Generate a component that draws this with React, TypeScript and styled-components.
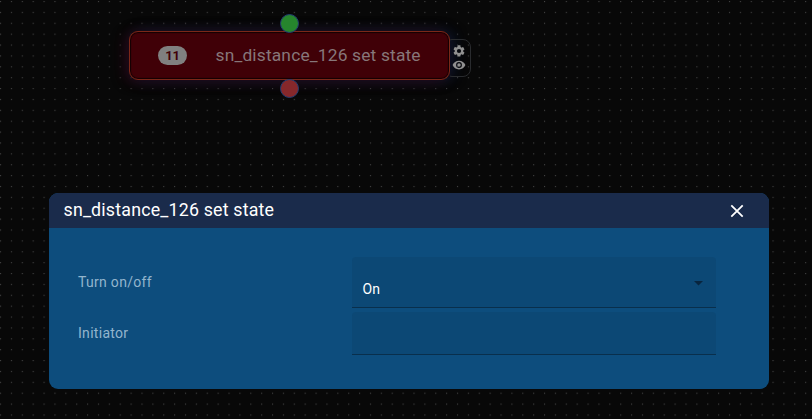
import React from "react";
import styled, { createGlobalStyle } from "styled-components";

const GlobalStyle = createGlobalStyle`
  *, *::before, *::after { box-sizing: border-box; }
  body {
    margin: 0;
    background: #080808;
    font-family: Roboto, "Liberation Sans", sans-serif;
    overflow: hidden;
  }
`;

const Page = styled.main`
  position: relative;
  display: flex;
  flex-direction: column;
  width: 812px;
  height: 419px;
  padding: 193px 43px 0 49px;
  overflow: hidden;
  background: #080808;
`;

const Grid = styled.svg`
  position: absolute;
  inset: 0;
  width: 100%;
  height: 100%;
`;

const NodeWrap = styled.div`
  position: absolute;
  left: 129px;
  top: 31px;
  width: 321px;
  height: 49px;
`;

const NodeBody = styled.div`
  position: relative;
  display: flex;
  align-items: center;
  width: 100%;
  height: 100%;
  padding-left: 28px;
  border: 1px solid #7c2718;
  border-radius: 9px;
  background: #400007;
  box-shadow: inset 0 0 1px 1px #120003, -5px 2px 14px rgba(65, 0, 25, 0.4),
    5px 0 14px rgba(0, 32, 75, 0.4), 0 0 14px rgba(50, 35, 65, 0.35);
`;

const Badge = styled.span`
  display: flex;
  align-items: center;
  justify-content: center;
  width: 29px;
  height: 19px;
  border-radius: 10px;
  background: #808080;
  color: #400007;
  font-size: 13px;
  line-height: 18px;
  font-weight: 700;
  letter-spacing: -0.3px;
`;

const NodeTitle = styled.span`
  margin: -2px 0 0 28.5px;
  color: #87777a;
  font-size: 17.4px;
  line-height: 24px;
  letter-spacing: 0.16px;
  white-space: nowrap;
`;

const Port = styled.span<{ $color: string; $top: number }>`
  position: absolute;
  left: 151px;
  top: ${(p) => p.$top}px;
  width: 19px;
  height: 19px;
  border: 1px solid #223c70;
  border-radius: 50%;
  background: ${(p) => p.$color};
`;

const NodeTools = styled.div`
  position: absolute;
  left: 315px;
  top: 8px;
  display: flex;
  flex-direction: column;
  align-items: center;
  width: 27px;
  height: 38px;
  padding: 4px 0 0 3px;
  border: 1px solid #292b2e;
  border-radius: 8px;
`;

const ToolIcon = styled.svg`
  position: relative;
  z-index: 1;
  display: block;
  width: 14px;
  height: 14px;
  fill: #909090;
`;

const Dialog = styled.section`
  position: relative;
  height: 196px;
  border-radius: 9px;
  overflow: hidden;
  background: #0d4d7d;
`;

const Header = styled.header`
  display: flex;
  align-items: center;
  justify-content: space-between;
  height: 35px;
  padding: 0 23px 0 14.5px;
  background: #1a2b4b;
`;

const Title = styled.h1`
  margin: -2px 0 0;
  color: #fff;
  font-size: 17.8px;
  font-weight: 400;
  line-height: 24px;
  letter-spacing: 0.2px;
`;

const CloseButton = styled.button`
  display: flex;
  padding: 0;
  border: 0;
  background: none;
  color: #fff;
`;

const Form = styled.div`
  display: grid;
  grid-template-columns: 274px 364px;
  grid-template-rows: 51px 43px;
  row-gap: 4px;
  padding: 29px 0 0 29px;
`;

const Label = styled.label`
  align-self: center;
  margin-top: -2px;
  color: #93b5cd;
  font-size: 14px;
  line-height: 20px;
  letter-spacing: 0.3px;
`;

const Field = styled.div`
  display: flex;
  justify-content: space-between;
  border-bottom: 1px solid #092f4c;
  border-radius: 4px 4px 0 0;
  background: #0c4875;
`;

const Value = styled.span`
  padding: 22px 0 0 10.5px;
  color: #fff;
  font-size: 14px;
  line-height: 20px;
  letter-spacing: 0.2px;
`;

const Arrow = styled.svg`
  width: 9px;
  height: 5px;
  margin: 24px 13px 0 0;
  fill: #08253f;
`;

export default function App() {
  return (
    <>
      <GlobalStyle />
      <Page>
        <Grid>
          <defs>
            <pattern id="dots" width="10.88" height="10.88" patternUnits="userSpaceOnUse">
              <rect x="0" y="1" width="1.1" height="1.1" fill="#434343" />
            </pattern>
          </defs>
          <rect width="100%" height="100%" fill="url(#dots)" />
        </Grid>
        <NodeWrap>
          <NodeBody>
            <Badge>11</Badge>
            <NodeTitle>sn_distance_126 set state</NodeTitle>
          </NodeBody>
          <Port $color="#26862d" $top={-17} />
          <Port $color="#86282b" $top={48} />
        </NodeWrap>
        <NodeToolsLayer>
          <NodeTools>
            <ToolIcon viewBox="0 0 24 24">
              <path d="M19.14 12.94c.04-.3.06-.61.06-.94s-.02-.64-.07-.94l2.03-1.58a.49.49 0 0 0 .12-.61l-1.92-3.32a.49.49 0 0 0-.59-.22l-2.39.96c-.5-.38-1.03-.7-1.62-.94l-.36-2.54A.48.48 0 0 0 13.92 2h-3.84a.48.48 0 0 0-.47.41l-.36 2.54c-.59.24-1.13.57-1.62.94l-2.39-.96a.49.49 0 0 0-.59.22L2.74 8.87a.48.48 0 0 0 .12.61l2.03 1.58c-.05.3-.09.63-.09.94s.02.64.07.94l-2.03 1.58a.49.49 0 0 0-.12.61l1.92 3.32c.12.22.37.29.59.22l2.39-.96c.5.38 1.03.7 1.62.94l.36 2.54c.05.24.24.41.48.41h3.84c.24 0 .44-.17.47-.41l.36-2.54c.59-.24 1.13-.56 1.62-.94l2.39.96c.22.08.47 0 .59-.22l1.92-3.32a.48.48 0 0 0-.12-.61l-2.01-1.58zM12 15.6A3.6 3.6 0 1 1 12 8.4a3.6 3.6 0 0 1 0 7.2z" />
            </ToolIcon>
            <ToolIcon viewBox="0 0 24 24">
              <path d="M12 4.5C7 4.5 2.73 7.61 1 12c1.73 4.39 6 7.5 11 7.5s9.27-3.11 11-7.5c-1.73-4.39-6-7.5-11-7.5zM12 17a5 5 0 1 1 0-10 5 5 0 0 1 0 10zm0-8a3 3 0 1 0 0 6 3 3 0 0 0 0-6z" />
            </ToolIcon>
          </NodeTools>
        </NodeToolsLayer>
        <Dialog>
          <Header>
            <Title>sn_distance_126 set state</Title>
            <CloseButton aria-label="Close">
              <svg width="18" height="18" viewBox="0 0 18 18" fill="none" stroke="currentColor" strokeWidth="1.8">
                <path d="M3.3 3.3l11.4 11.4M14.7 3.3L3.3 14.7" />
              </svg>
            </CloseButton>
          </Header>
          <Form>
            <Label>Turn on/off</Label>
            <Field>
              <Value>On</Value>
              <Arrow viewBox="0 0 9 5">
                <path d="M0 0h9L4.5 4.5z" />
              </Arrow>
            </Field>
            <Label>Initiator</Label>
            <Field />
          </Form>
        </Dialog>
      </Page>
    </>
  );
}

/* Sits above the node glow but is clipped to the strip right of the node. */
const NodeToolsLayer = styled.div`
  position: absolute;
  left: 129px;
  top: 31px;
  width: 345px;
  height: 49px;
  clip-path: inset(0 0 0 321px);
`;
